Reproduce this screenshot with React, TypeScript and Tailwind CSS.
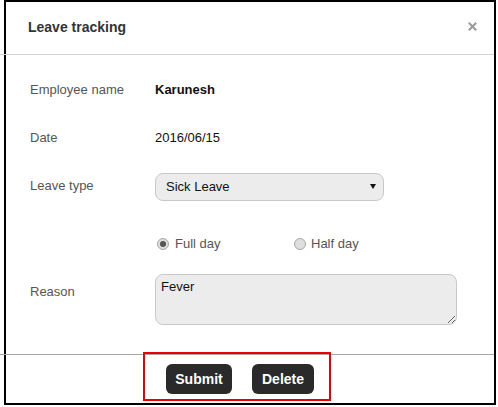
import { useState } from 'react';

export default function App() {
    const [leaveType, setLeaveType] = useState('sick');
    const [dayType, setDayType] = useState<'full' | 'half'>('full');
    const [reason, setReason] = useState('Fever');

    return (
        <div className="w-[498px] h-[407px] bg-white font-['Liberation_Sans',Arial,sans-serif]">
            <div className="ml-[4px] w-[492px] h-[405px] border-2 border-black flex flex-col">
                {/* header */}
                <div className="h-[52px] flex items-start justify-between pl-[22px] pr-[17px]">
                    <h3 className="pt-[17px] text-[14px] leading-[16px] font-bold text-[#333]">Leave tracking</h3>
                    <button className="mt-[20px] w-[9px] h-[9px]" aria-label="Close">
                        <svg width="9" height="9" viewBox="0 0 9 9">
                            <path d="M0.8 0.8 L8.2 8.2 M8.2 0.8 L0.8 8.2" stroke="#9a9a9a" strokeWidth="2" />
                        </svg>
                    </button>
                </div>
                <div className="h-px bg-[#d2d2d2] -ml-[6px]" />

                {/* body */}
                <div className="h-[299px] pl-[24px] pt-[11px] text-[13px] leading-[16px]">
                    <div className="h-[48px] flex items-center">
                        <span className="w-[125px] text-[#555]">Employee name</span>
                        <span className="font-bold text-[#111]">Karunesh</span>
                    </div>
                    <div className="h-[48px] flex items-center">
                        <span className="w-[125px] text-[#555]">Date</span>
                        <span className="text-[#111]">2016/06/15</span>
                    </div>
                    <div className="h-[48px] flex items-start">
                        <span className="w-[125px] mt-[16px] text-[#555]">Leave type</span>
                        <div className="relative mt-[11px] w-[229px] h-[28px]">
                            <select
                                value={leaveType}
                                onChange={(e) => setLeaveType(e.target.value)}
                                className="appearance-none w-full h-full rounded-[8px] border border-[#c8c8c8] bg-[#ececec] pl-[10px] text-[13px] text-[#111] outline-none"
                            >
                                <option value="sick">Sick Leave</option>
                                <option value="casual">Casual Leave</option>
                                <option value="earned">Earned Leave</option>
                            </select>
                            <svg className="absolute right-[8px] top-[11px] pointer-events-none" width="6" height="5" viewBox="0 0 6 5">
                                <path d="M0 0 H6 L3 5 Z" fill="#111" />
                            </svg>
                        </div>
                    </div>
                    <div className="h-[64px] pt-[4px] flex items-center">
                        <span className="w-[125px]" />
                        <label className="w-[137px] ml-[2px] flex items-center cursor-pointer" onClick={() => setDayType('full')}>
                            <span className="w-[12px] h-[12px] rounded-full border border-[#a8a8a8] bg-[#dedede] flex items-center justify-center">
                                {dayType === 'full' && <span className="w-[6px] h-[6px] rounded-full bg-[#555]" />}
                            </span>
                            <span className="ml-[6px] text-[#555]">Full day</span>
                        </label>
                        <label className="flex items-center cursor-pointer" onClick={() => setDayType('half')}>
                            <span className="w-[12px] h-[12px] rounded-full border border-[#a8a8a8] bg-[#dedede] flex items-center justify-center">
                                {dayType === 'half' && <span className="w-[6px] h-[6px] rounded-full bg-[#555]" />}
                            </span>
                            <span className="ml-[5px] text-[#555]">Half day</span>
                        </label>
                    </div>
                    <div className="flex items-start">
                        <span className="w-[125px] mt-[10px] text-[#555]">Reason</span>
                        <textarea
                            value={reason}
                            onChange={(e) => setReason(e.target.value)}
                            className="w-[302px] h-[51px] rounded-[8px] border border-[#c8c8c8] bg-[#ececec] px-[5px] py-[4px] text-[13px] leading-[16px] text-[#111] outline-none"
                        />
                    </div>
                </div>
                <div className="h-px bg-[#a6a6a6] -ml-[6px]" />

                {/* footer */}
                <div className="h-[48px]">
                    <div className="-mt-[3px] ml-[137px] w-[188px] h-[49px] border-2 border-[#e60000] flex items-start pt-[10px] pl-[21px] gap-[20px]">
                        <button className="w-[66px] h-[30px] rounded-[6px] bg-[#2a2a2a] text-white text-[14px] font-bold flex items-center justify-center">
                            Submit
                        </button>
                        <button className="w-[62px] h-[30px] rounded-[6px] bg-[#2a2a2a] text-white text-[14px] font-bold flex items-center justify-center">
                            Delete
                        </button>
                    </div>
                </div>
            </div>
        </div>
    );
}
